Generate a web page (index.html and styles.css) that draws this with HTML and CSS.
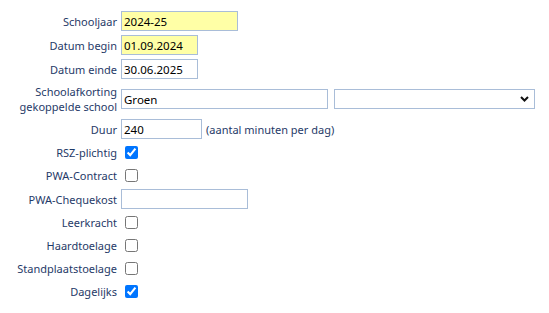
FILE: index.html
```html
<!DOCTYPE html>
<html lang="nl">
<head>
    <meta charset="UTF-8">
    <meta name="viewport" content="width=device-width, initial-scale=1.0">
    <title>Schooljaar</title>
    <link rel="stylesheet" href="styles.css">
</head>
<body>
    <form class="form">
        <div class="row">
            <label class="label" for="schooljaar">Schooljaar</label>
            <input class="field field-required w-lg" id="schooljaar" type="text" value="2024-25">
        </div>
        <div class="row">
            <label class="label" for="datumBegin">Datum begin</label>
            <input class="field field-required w-sm" id="datumBegin" type="text" value="01.09.2024">
        </div>
        <div class="row">
            <label class="label" for="datumEinde">Datum einde</label>
            <input class="field w-sm" id="datumEinde" type="text" value="30.06.2025">
        </div>
        <div class="row row-tall">
            <label class="label" for="school">Schoolafkorting<br>gekoppelde school</label>
            <input class="field w-xl" id="school" type="text" value="Groen">
            <!-- dropdown with chevron -->
            <div class="select-wrap">
                <select class="select" id="schoolSelect">
                    <option value=""></option>
                </select>
                <svg class="chevron" width="9" height="6" viewBox="0 0 9 6">
                    <path d="M1 1 L4.5 4.5 L8 1" fill="none" stroke="#111" stroke-width="2"/>
                </svg>
            </div>
        </div>
        <div class="row">
            <label class="label" for="duur">Duur</label>
            <input class="field w-md" id="duur" type="text" value="240">
            <span class="hint">(aantal minuten per dag)</span>
        </div>
        <div class="row row-check">
            <label class="label" for="rsz">RSZ-plichtig</label>
            <input class="check" id="rsz" type="checkbox" checked>
        </div>
        <div class="row row-check">
            <label class="label" for="pwaContract">PWA-Contract</label>
            <input class="check" id="pwaContract" type="checkbox">
        </div>
        <div class="row">
            <label class="label" for="pwaCheque">PWA-Chequekost</label>
            <input class="field w-cheque" id="pwaCheque" type="text" value="">
        </div>
        <div class="row row-check">
            <label class="label" for="leerkracht">Leerkracht</label>
            <input class="check" id="leerkracht" type="checkbox">
        </div>
        <div class="row row-check">
            <label class="label" for="haard">Haardtoelage</label>
            <input class="check" id="haard" type="checkbox">
        </div>
        <div class="row row-check">
            <label class="label" for="standplaats">Standplaatstoelage</label>
            <input class="check" id="standplaats" type="checkbox">
        </div>
        <div class="row row-check">
            <label class="label" for="dagelijks">Dagelijks</label>
            <input class="check" id="dagelijks" type="checkbox" checked>
        </div>
    </form>
</body>
</html>
```

FILE: styles.css
```css
body {
    margin: 0;
    padding: 9px 0 0 0;
    font-family: "Noto Sans", "Open Sans", sans-serif;
    font-size: 11px;
    background: #fff;
}

.form {
    display: flex;
    flex-direction: column;
}

.row {
    display: flex;
    align-items: center;
    height: 24px;
}

.row-tall {
    height: 36px;
}

.row-check {
    height: 23px;
}

.label {
    width: 117px;
    flex-shrink: 0;
    text-align: right;
    color: #1f3a68;
    line-height: 15px;
    padding-right: 4px;
    box-sizing: content-box;
}

.field {
    box-sizing: border-box;
    height: 20px;
    margin: 0;
    padding: 1px 2px;
    border: 1px solid #a9bdd8;
    border-radius: 0;
    font-family: inherit;
    font-size: 11.5px;
    color: #000;
    background: #fff;
    outline: none;
}

.field-required {
    background: #ffffa6;
}

.w-sm { width: 77px; }
.w-md { width: 81px; }
.w-lg { width: 117px; }
.w-xl { width: 207px; }
.w-cheque { width: 127px; }

.select-wrap {
    position: relative;
    margin-left: 6px;
}

.select {
    display: block;
    box-sizing: border-box;
    width: 201px;
    height: 20px;
    margin: 0;
    padding: 0 2px;
    border: 1px solid #a9bdd8;
    border-radius: 0;
    background: #fff;
    appearance: none;
    -webkit-appearance: none;
    font-family: inherit;
    font-size: 11.5px;
}

.chevron {
    position: absolute;
    right: 6px;
    top: 7px;
    pointer-events: none;
}

.hint {
    margin-left: 4px;
    color: #1f3a68;
}

.check {
    margin: 3px 3px 3px 4px;
    width: 13px;
    height: 13px;
}
```
